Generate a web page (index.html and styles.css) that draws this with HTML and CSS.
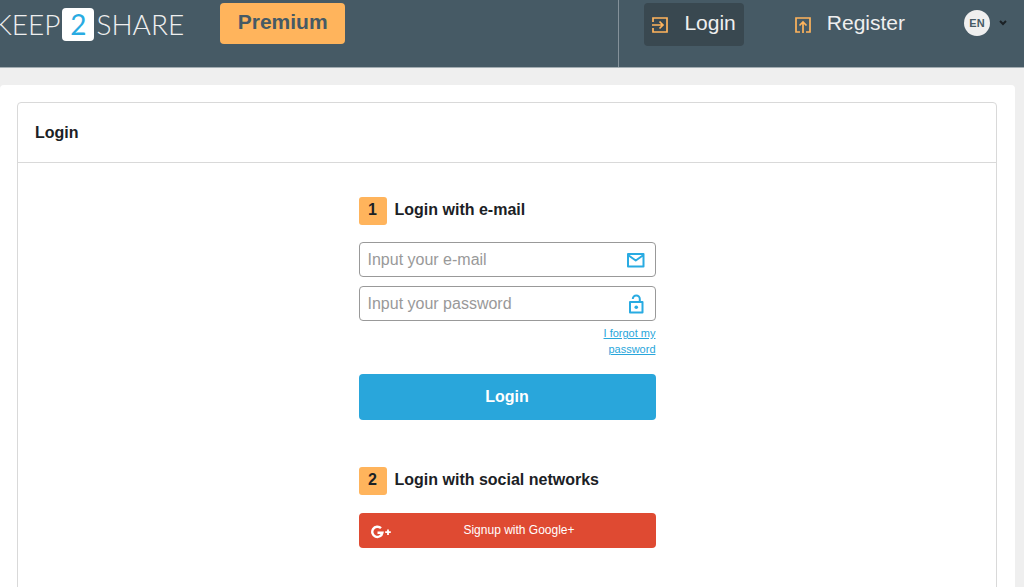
FILE: index.html
```html
<!DOCTYPE html>
<html lang="en">
<head>
<meta charset="utf-8">
<meta name="viewport" content="width=device-width, initial-scale=1">
<title>Login</title>
<link rel="stylesheet" href="styles.css">
</head>
<body>
<header class="topbar">
  <a class="logo" href="#"><span>KEEP</span><span class="logo-two">2</span><span>SHARE</span></a>
  <a class="premium" href="#">Premium</a>
  <nav class="account">
    <a class="nav-link active" href="#">
      <svg class="nav-icon" viewBox="0 0 16 16" aria-hidden="true"><path d="M1 5V1h14v14H1v-4M0 8h11M7.500 4.500L11 8l-3.500 3.500"/></svg>
      <span>Login</span>
    </a>
    <a class="nav-link" href="#">
      <svg class="nav-icon" viewBox="0 0 16 16" aria-hidden="true"><path d="M5 15H1V1h14v14h-4M8 16V5M4.500 8.500L8 5l3.500 3.500"/></svg>
      <span>Register</span>
    </a>
    <button class="language" type="button" aria-label="Language">
      <span class="language-code">EN</span>
      <svg class="chevron" viewBox="0 0 8 6" aria-hidden="true"><path d="M1 1l3 3 3-3"/></svg>
    </button>
  </nav>
</header>
<main class="page">
  <section class="card">
    <h1 class="card-title">Login</h1>
    <form class="login-form">
      <h2 class="step"><span class="step-number">1</span>Login with e-mail</h2>
      <label class="field">
        <input type="email" placeholder="Input your e-mail" aria-label="E-mail">
        <svg class="field-icon" viewBox="0 0 20 20" aria-hidden="true"><path d="M2 4h15.500v12.500H2zM2 5l7.750 5.500L17.500 5"/></svg>
      </label>
      <label class="field">
        <input type="password" placeholder="Input your password" aria-label="Password">
        <svg class="field-icon" viewBox="0 0 20 20" aria-hidden="true"><path d="M4 8h12.500v10.500H4zM6.800 5a3.500 3.500 0 0 1 7 0V8"/><circle cx="10.250" cy="13.250" r="1.800"/></svg>
      </label>
      <a class="forgot" href="#">I forgot my password</a>
      <button class="submit" type="submit">Login</button>
      <h2 class="step"><span class="step-number">2</span>Login with social networks</h2>
      <button class="google" type="button">
        <svg class="google-icon" viewBox="0 0 20 14" aria-hidden="true"><path class="google-g" d="M10 3.200A5.100 5.100 0 1 0 11.400 7.700H6.500"/><path class="google-plus" d="M14.200 7.200h5.600M17 4.400V10"/></svg>
        <span class="google-label">Signup with Google+</span>
      </button>
    </form>
  </section>
</main>
</body>
</html>
```
FILE: styles.css
```css
* {
  box-sizing: border-box;
}

body {
  margin: 0;
  background: #efefef;
  color: #1b2125;
  font-family: "Liberation Sans", Arial, sans-serif;
}

a {
  text-decoration: none;
}

button {
  border: 0;
  font-family: inherit;
  cursor: pointer;
}

.topbar {
  display: flex;
  align-items: flex-start;
  height: 68px;
  background: #465a65;
  border-bottom: 1px solid #a3adb2;
}

.logo {
  display: flex;
  align-items: center;
  gap: 2px;
  margin: 8px 36px 0 -6px;
  color: #efefef;
  font: 300 28px/33px Lato, sans-serif;
}

.logo-two {
  width: 32px;
  border-radius: 4px;
  background: #fff;
  color: #29abe2;
  font-weight: 400;
  text-align: center;
}

.premium {
  width: 125px;
  margin-top: 3px;
  border-radius: 4px;
  background: #ffb45c;
  color: #465a65;
  font-size: 21px;
  font-weight: 700;
  line-height: 38px;
  padding-bottom: 3px;
  text-align: center;
}

.account {
  display: flex;
  align-items: flex-start;
  height: 100%;
  margin-left: auto;
  padding: 3px 17px 0 25px;
  border-left: 1px solid #84919a;
}

.nav-link {
  display: flex;
  align-items: center;
  gap: 16px;
  height: 43px;
  margin-right: 43px;
  padding: 0 8px;
  border-radius: 4px;
  color: #efefef;
  font-size: 21px;
  line-height: 40px;
}

.nav-link span {
  padding-bottom: 3px;
}

.nav-link.active {
  background: #394850;
}

.nav-icon {
  width: 16px;
  height: 16px;
  fill: none;
  stroke: #ffb45c;
  stroke-width: 1.7;
}

.language {
  display: flex;
  align-items: center;
  gap: 9px;
  margin: 7px 0 0 8px;
  padding: 0;
  background: none;
}

.language-code {
  width: 26px;
  border-radius: 50%;
  background: #efefef;
  color: #465a65;
  font-size: 11px;
  font-weight: 700;
  line-height: 26px;
  text-align: center;
}

.chevron {
  width: 8px;
  height: 6px;
  fill: none;
  stroke: #1b2125;
  stroke-width: 2;
}

.page {
  margin: 17px 9px 0 0;
  padding: 17px 18px 18px 17px;
  border-radius: 4px;
  background: #fff;
}

.card {
  border: 1px solid #d9d9d9;
  border-radius: 4px;
}

.card-title {
  margin: 0;
  padding: 1px 17px 0;
  border-bottom: 1px solid #d9d9d9;
  font-size: 16px;
  line-height: 58px;
}

.login-form {
  display: flex;
  flex-direction: column;
  width: 100%;
  max-width: 297px;
  margin: 0 auto;
  padding: 34px 0 60px;
}

.step {
  display: flex;
  gap: 8px;
  margin: 0 0 17px;
  font-size: 16px;
  line-height: 26px;
}

.step-number {
  width: 28px;
  height: 28px;
  border-radius: 3px;
  background: #ffb45c;
  text-align: center;
}

.field {
  display: flex;
  align-items: center;
  height: 35px;
  margin-bottom: 9px;
  padding: 0 9px 0 8px;
  border: 1px solid #999;
  border-radius: 4px;
}

.field input {
  flex: 1;
  min-width: 0;
  padding: 0;
  border: 0;
  outline: 0;
  background: none;
  color: #1b2125;
  font: 16px/24px "Liberation Sans", Arial, sans-serif;
}

.field input::placeholder {
  color: #999;
  opacity: 1;
}

.field-icon {
  width: 20px;
  height: 20px;
  fill: none;
  stroke: #29abe2;
  stroke-width: 2;
  stroke-linejoin: round;
}

.field-icon circle {
  fill: #29abe2;
  stroke: none;
}

.forgot {
  align-self: flex-end;
  width: 60px;
  margin-top: -5px;
  color: #29a6db;
  font-size: 11px;
  line-height: 16px;
  text-align: right;
  text-decoration: underline;
}

.submit {
  height: 46px;
  margin: 17px 0 47px;
  padding: 0;
  border-radius: 4px;
  background: #29a6db;
  color: #fff;
  font-size: 16px;
  font-weight: 700;
}

.google {
  display: flex;
  align-items: center;
  height: 35px;
  margin-top: 1px;
  padding: 0 0 0 12px;
  border-radius: 4px;
  background: #df4a32;
  color: #fff;
}

.google-icon {
  width: 20px;
  height: 14px;
  margin-top: 2px;
  fill: none;
  stroke: #fff;
}

.google-g {
  stroke-width: 2.4;
}

.google-plus {
  stroke-width: 1.8;
}

.google-label {
  flex: 1;
  padding: 0 8px 2px 0;
  font-size: 12px;
  text-align: center;
}
```
